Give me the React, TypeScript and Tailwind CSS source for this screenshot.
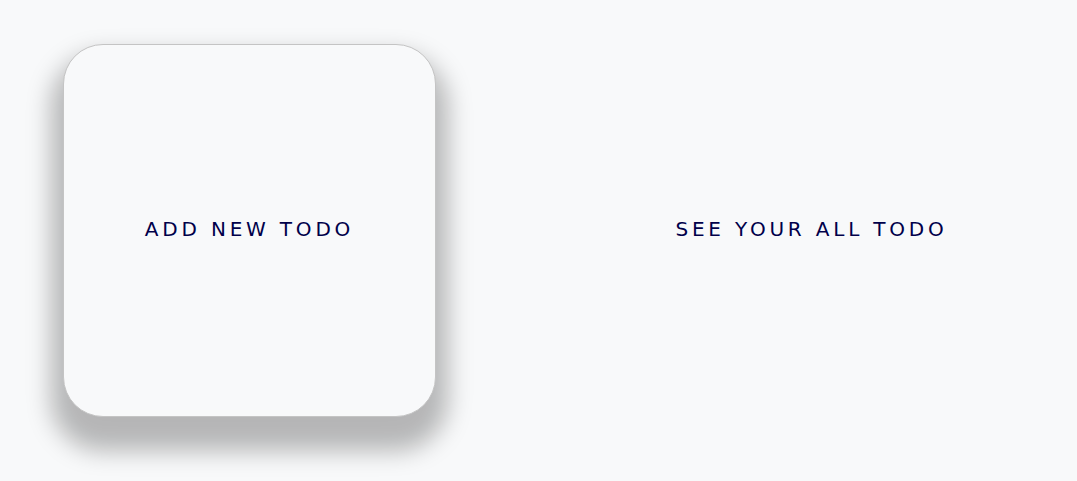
export default function App() {
  return (
    <div className="min-h-[481px] w-full bg-[#f8f9fa] flex items-start pt-[44px] pl-[63px] gap-[189px]" style={{ fontFamily: '"DejaVu Sans", Verdana, sans-serif' }}>
      <div className="w-[373px] h-[373px] rounded-[40px] border border-[#c4c4c4] bg-[#f8f9fa] shadow-[0_22px_24px_12px_rgba(0,0,0,0.27)] flex items-center justify-center">
        <span className="text-[20px] tracking-[3.8px] text-[#00004a] leading-none pb-[4px]">ADD NEW TODO</span>
      </div>
      <div className="w-[373px] h-[373px] rounded-[40px] flex items-center justify-center">
        <span className="text-[20px] tracking-[3.8px] text-[#00004a] leading-none pb-[4px]">SEE YOUR ALL TODO</span>
      </div>
    </div>
  );
}
